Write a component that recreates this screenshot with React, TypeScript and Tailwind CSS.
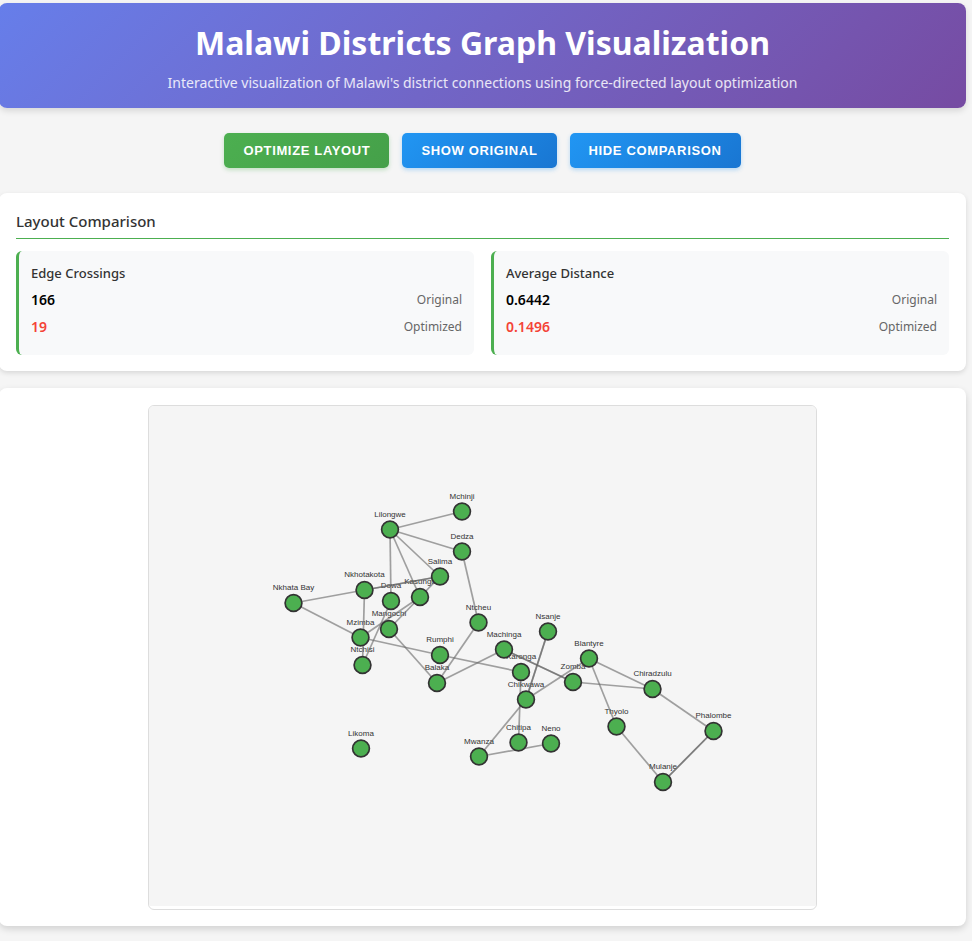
const sans = "font-['Noto_Sans','Segoe_UI',sans-serif]";

type Node = { name: string; x: number; y: number };

const nodes: Node[] = [
  { name: "Mchinji", x: 313, y: 105.5 },
  { name: "Lilongwe", x: 241, y: 123.5 },
  { name: "Dedza", x: 313, y: 145.5 },
  { name: "Salima", x: 291, y: 170.5 },
  { name: "Nkhotakota", x: 215.5, y: 184 },
  { name: "Nkhata Bay", x: 144.5, y: 197 },
  { name: "Dowa", x: 242, y: 195 },
  { name: "Kasungu", x: 271, y: 191 },
  { name: "Ntcheu", x: 329.5, y: 216.5 },
  { name: "Mangochi", x: 240, y: 223 },
  { name: "Mzimba", x: 211.5, y: 231.5 },
  { name: "Nsanje", x: 399, y: 225.5 },
  { name: "Machinga", x: 355, y: 243.5 },
  { name: "Rumphi", x: 291, y: 249 },
  { name: "Blantyre", x: 440, y: 252.5 },
  { name: "Ntchisi", x: 213.5, y: 259 },
  { name: "Karonga", x: 372, y: 266 },
  { name: "Balaka", x: 288, y: 277 },
  { name: "Zomba", x: 424, y: 276 },
  { name: "Chiradzulu", x: 503.5, y: 283 },
  { name: "Chikwawa", x: 377, y: 293.5 },
  { name: "Thyolo", x: 467.5, y: 320.5 },
  { name: "Phalombe", x: 564.5, y: 325 },
  { name: "Likoma", x: 212, y: 342.5 },
  { name: "Chitipa", x: 369.5, y: 336.5 },
  { name: "Neno", x: 402, y: 337.5 },
  { name: "Mwanza", x: 330, y: 350.5 },
  { name: "Mulanje", x: 514, y: 376 },
];

const edges: [string, string][] = [
  ["Lilongwe", "Mchinji"],
  ["Lilongwe", "Dedza"],
  ["Lilongwe", "Salima"],
  ["Lilongwe", "Kasungu"],
  ["Lilongwe", "Dowa"],
  ["Nkhotakota", "Salima"],
  ["Salima", "Nkhotakota"],
  ["Nkhata Bay", "Nkhotakota"],
  ["Nkhata Bay", "Mzimba"],
  ["Nkhotakota", "Ntchisi"],
  ["Dowa", "Ntchisi"],
  ["Kasungu", "Mzimba"],
  ["Salima", "Mangochi"],
  ["Mzimba", "Rumphi"],
  ["Rumphi", "Karonga"],
  ["Mangochi", "Balaka"],
  ["Dedza", "Ntcheu"],
  ["Ntcheu", "Balaka"],
  ["Balaka", "Machinga"],
  ["Machinga", "Zomba"],
  ["Zomba", "Machinga"],
  ["Karonga", "Chitipa"],
  ["Nsanje", "Chikwawa"],
  ["Chikwawa", "Nsanje"],
  ["Chikwawa", "Blantyre"],
  ["Chikwawa", "Mwanza"],
  ["Mwanza", "Neno"],
  ["Zomba", "Chiradzulu"],
  ["Blantyre", "Chiradzulu"],
  ["Blantyre", "Thyolo"],
  ["Chiradzulu", "Phalombe"],
  ["Thyolo", "Mulanje"],
  ["Mulanje", "Phalombe"],
  ["Phalombe", "Mulanje"],
];

const find = (name: string) => nodes.find((n) => n.name === name)!;

function Graph() {
  return (
    <svg viewBox="0 0 667 500" className="block w-full bg-[#f5f5f5]" role="img" aria-label="Malawi districts graph">
      {nodes.map((n) => (
        <text key={n.name} x={n.x} y={n.y - 13} textAnchor="middle" className="fill-[#333] font-['Liberation_Sans',Arial,sans-serif] text-[8px]">
          {n.name}
        </text>
      ))}
      {edges.map(([a, b]) => {
        const s = find(a);
        const t = find(b);
        return <line key={a + b} x1={s.x} y1={s.y} x2={t.x} y2={t.y} stroke="#666" strokeOpacity={0.6} strokeWidth={1.7} />;
      })}
      {nodes.map((n) => (
        <circle key={n.name} cx={n.x} cy={n.y} r={8.4} fill="#4caf50" stroke="#333" strokeWidth={1.7} />
      ))}
    </svg>
  );
}

function Metric({ title, original, optimized }: { title: string; original: string; optimized: string }) {
  return (
    <div className="h-[104px] rounded-md border-l-3 border-[#4caf50] bg-[#f8f9fa] px-3 pt-3">
      <h3 className="text-[13px] leading-5 font-medium text-[#333]">{title}</h3>
      <div className="mt-[3px] flex h-[27px] items-center justify-between">
        <span className="text-[14px] font-semibold text-black">{original}</span>
        <span className="text-[12px] text-[#666]">Original</span>
      </div>
      <div className="flex h-[27px] items-center justify-between">
        <span className="text-[14px] font-semibold text-[#f44336]">{optimized}</span>
        <span className="text-[12px] text-[#666]">Optimized</span>
      </div>
    </div>
  );
}

const button =
  "h-[35px] rounded-[5px] px-[19px] font-['Liberation_Sans',Arial,sans-serif] text-[13px] font-bold tracking-wider text-white uppercase";
const blue = "bg-linear-135 from-[#2196f3] to-[#1976d2] shadow-[0_2px_4px_rgba(33,150,243,0.3)]";
const card = "rounded-lg bg-white px-[17px] pb-4";

export default function App() {
  return (
    <div className={`min-h-screen bg-[#f5f5f5] pt-[3px] pr-1.5 pb-[15px] ${sans}`}>
      <div className="-ml-px">
        <header className="flex h-[105px] flex-col items-center rounded-lg bg-linear-135 from-[#667eea] to-[#764ba2] pt-4 text-center text-white shadow-[0_3px_6px_rgba(0,0,0,0.12)]">
          <h1 className="text-[32px] leading-[48px] font-bold">Malawi Districts Graph Visualization</h1>
          <p className="mt-1 text-[14px] leading-6 text-white/85">
            Interactive visualization of Malawi's district connections using force-directed layout optimization
          </p>
        </header>

        <div className="flex justify-center gap-[13px] py-[25px]">
          <button type="button" className={`${button} bg-linear-135 from-[#4caf50] to-[#45a049] shadow-[0_2px_4px_rgba(76,175,80,0.3)]`}>
            Optimize Layout
          </button>
          <button type="button" className={`${button} ${blue}`}>Show Original</button>
          <button type="button" className={`${button} ${blue}`}>Hide Comparison</button>
        </div>

        <section className={`${card} pt-4 shadow-[0_2px_5px_rgba(0,0,0,0.12)]`}>
          <h2 className="border-b border-[#4caf50] pb-[5px] text-[15px] leading-6 font-medium text-[#333]">Layout Comparison</h2>
          <div className="mt-3 grid grid-cols-2 gap-[17px]">
            <Metric title="Edge Crossings" original="166" optimized="19" />
            <Metric title="Average Distance" original="0.6442" optimized="0.1496" />
          </div>
        </section>

        <section className={`${card} mt-[17px] pt-[17px] shadow-[0_3px_7px_rgba(0,0,0,0.15)]`}>
          <div className="mx-auto max-w-[669px] overflow-hidden rounded-md border border-[#ddd] bg-white pb-[3px]">
            <Graph />
          </div>
        </section>
      </div>
    </div>
  );
}
